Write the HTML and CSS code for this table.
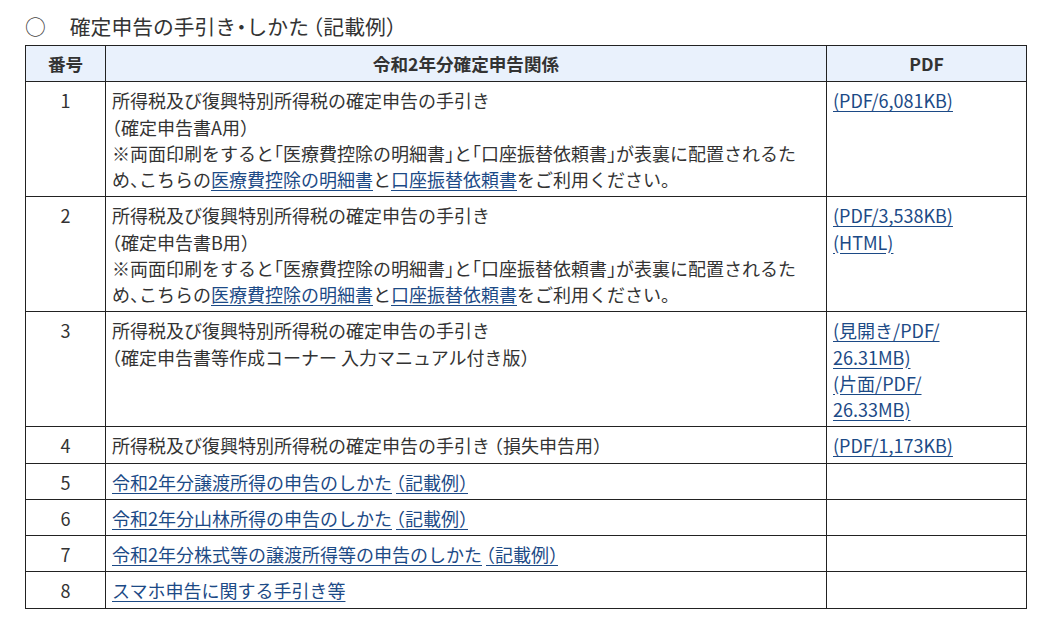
FILE: index.html
```html
<!DOCTYPE html>
<html lang="ja">
<head>
<meta charset="utf-8">
<title>確定申告の手引き・しかた（記載例）</title>
<link rel="stylesheet" href="styles.css">
</head>
<body>
<h2 class="heading"><span class="mark">○</span><span>確定申告の手引き・しかた<span class="gap">（記載例）</span></span></h2>
<table class="list">
  <colgroup>
    <col class="c-num">
    <col class="c-title">
    <col class="c-pdf">
  </colgroup>
  <thead>
    <tr><th>番号</th><th>令和2年分確定申告関係</th><th>PDF</th></tr>
  </thead>
  <tbody>
    <tr>
      <td class="num">1</td>
      <td>所得税及び復興特別所得税の確定申告の手引き<br>（確定申告書A用）<br>※両面印刷をすると「医療費控除の明細書」と「口座振替依頼書」が表裏に配置されるため、こちらの<a href="#">医療費控除の明細書</a>と<a href="#">口座振替依頼書</a>をご利用ください。</td>
      <td><a href="#">(PDF/6,081KB)</a></td>
    </tr>
    <tr>
      <td class="num">2</td>
      <td>所得税及び復興特別所得税の確定申告の手引き<br>（確定申告書B用）<br>※両面印刷をすると「医療費控除の明細書」と「口座振替依頼書」が表裏に配置されるため、こちらの<a href="#">医療費控除の明細書</a>と<a href="#">口座振替依頼書</a>をご利用ください。</td>
      <td><a href="#">(PDF/3,538KB)</a><br><a href="#">(HTML)</a></td>
    </tr>
    <tr>
      <td class="num">3</td>
      <td>所得税及び復興特別所得税の確定申告の手引き<br>（確定申告書等作成コーナー 入力マニュアル付き版）</td>
      <td><a href="#">(見開き/PDF/<br>26.31MB)</a><br><a href="#">(片面/PDF/<br>26.33MB)</a></td>
    </tr>
    <tr>
      <td class="num">4</td>
      <td>所得税及び復興特別所得税の確定申告の手引き<span class="gap">（損失申告用）</span></td>
      <td><a href="#">(PDF/1,173KB)</a></td>
    </tr>
    <tr>
      <td class="num">5</td>
      <td><a href="#">令和2年分譲渡所得の申告のしかた<span class="gap">（記載例）</span></a></td>
      <td></td>
    </tr>
    <tr>
      <td class="num">6</td>
      <td><a href="#">令和2年分山林所得の申告のしかた<span class="gap">（記載例）</span></a></td>
      <td></td>
    </tr>
    <tr>
      <td class="num">7</td>
      <td><a href="#">令和2年分株式等の譲渡所得等の申告のしかた<span class="gap">（記載例）</span></a></td>
      <td></td>
    </tr>
    <tr>
      <td class="num">8</td>
      <td><a href="#">スマホ申告に関する手引き等</a></td>
      <td></td>
    </tr>
  </tbody>
</table>
</body>
</html>
```
FILE: styles.css
```css
html, body {
  margin: 0;
  background: #fff;
}
body {
  padding: 11px 25px 0 25px;
  font-family: "Noto Sans CJK JP", "Noto Sans", sans-serif;
  color: #333;
  font-size: 18px;
  line-height: 26.25px;
  font-feature-settings: "halt";
}
.heading {
  display: flex;
  align-items: center;
  gap: 24px;
  margin: 0 0 4px 0;
  font-size: 20.8px;
  font-weight: normal;
  line-height: 30px;
  color: #333;
}
.heading .mark {
  color: #444;
  font-feature-settings: normal;
}
.gap {
  margin-left: 4px;
}
.list {
  border-collapse: collapse;
  width: 1001px;
  table-layout: fixed;
}
.c-num { width: 80px; }
.c-title { width: 721px; }
.c-pdf { width: 200px; }
.list th,
.list td {
  border: 1px solid #222;
  padding: 5px 6px 4px 6px;
  vertical-align: top;
  text-align: left;
}
.list th {
  background: #e9f1fc;
  font-weight: bold;
  text-align: center;
  color: #333;
  font-size: 17.6px;
}
.list td.num {
  text-align: center;
}
.list a {
  color: #1c4a86;
  text-decoration: underline;
  text-underline-offset: 3px;
}
```
